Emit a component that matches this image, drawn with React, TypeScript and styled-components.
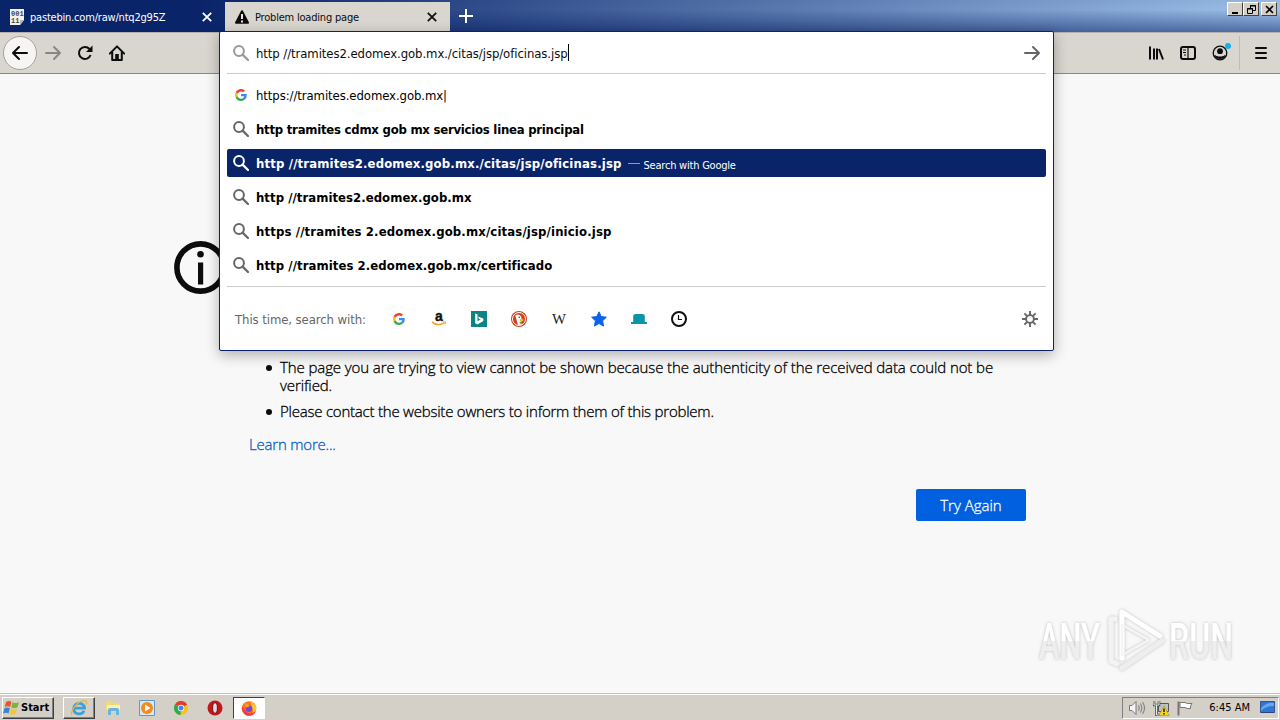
import styled, { createGlobalStyle } from 'styled-components';
import type { ReactNode } from 'react';

const GlobalStyle = createGlobalStyle`
  * {
    box-sizing: border-box;
  }
  body {
    margin: 0;
    overflow: hidden;
    font-family: 'DejaVu Sans Condensed', 'DejaVu Sans', sans-serif;
    font-stretch: condensed;
    color: #0c0c0d;
  }
  svg {
    display: block;
    flex: none;
  }
`;

const results = [
  { text: 'http tramites cdmx gob mx servicios linea principal', spacing: -0.24 },
  {
    text: 'http //tramites2.edomex.gob.mx./citas/jsp/oficinas.jsp',
    spacing: 0.15,
    action: 'Search with Google',
  },
  { text: 'http //tramites2.edomex.gob.mx', spacing: 0.04 },
  { text: 'https //tramites 2.edomex.gob.mx/citas/jsp/inicio.jsp', spacing: 0.14 },
  { text: 'http //tramites 2.edomex.gob.mx/certificado', spacing: 0.07 },
];

const SearchIcon = () => (
  <svg width="16" height="16" viewBox="0 0 16 16" fill="none">
    <circle cx="6" cy="6" r="4.9" stroke="currentColor" strokeWidth="2" />
    <path d="M9.6 9.6 15 15" stroke="currentColor" strokeWidth="2.2" strokeLinecap="round" />
  </svg>
);

const GoogleIcon = () => (
  <svg width="12" height="12" viewBox="0 0 48 48">
    <path fill="#EA4335" d="M24 9.5c3.5 0 6.7 1.2 9.2 3.6l6.9-6.9C35.9 2.4 30.5 0 24 0 14.6 0 6.5 5.4 2.6 13.2l8 6.2C12.4 13.7 17.7 9.5 24 9.5z" />
    <path fill="#4285F4" d="M47 24.5c0-1.6-.2-3.1-.4-4.5H24v9h12.9c-.6 3-2.3 5.5-4.8 7.2l7.7 6C44.4 38 47 31.8 47 24.5z" />
    <path fill="#FBBC05" d="M10.5 28.6c-.5-1.5-.8-3-.8-4.6s.3-3.1.8-4.6l-8-6.2C.9 16.5 0 20.1 0 24s.9 7.5 2.6 10.8l7.9-6.2z" />
    <path fill="#34A853" d="M24 48c6.5 0 11.9-2.1 15.9-5.8l-7.7-6c-2.2 1.4-4.9 2.3-8.2 2.3-6.3 0-11.6-4.2-13.5-9.9l-8 6.2C6.5 42.6 14.6 48 24 48z" />
  </svg>
);

const AmazonIcon = () => (
  <svg width="16" height="16" viewBox="0 0 16 16" overflow="visible">
    <text x="4" y="9.5" fontFamily="Liberation Sans" fontSize="14" fontWeight="700" fill="#111" stroke="#111" strokeWidth=".4">a</text>
    <path d="M1 10.8c3.6 3.4 8.6 3.4 12.3.8" fill="none" stroke="#f5a11c" strokeWidth="1.6" />
    <path d="M12 11.1l2.6-.2-.7 2.6" fill="none" stroke="#f5a11c" />
  </svg>
);

const BingIcon = () => (
  <svg width="16" height="16" viewBox="0 0 16 16">
    <path fill="#0c8484" d="M0 0h16v16H0z" />
    <path fill="#fff" d="M4.2 2.5 6.5 3.3v7l3-1.7-1.5-.7-.9-2.3 5.2 1.8v2.6L6.5 13.5l-2.3-1.3z" />
  </svg>
);

const DuckIcon = () => (
  <svg width="16" height="16" viewBox="0 0 16 16">
    <circle cx="8" cy="8" r="8" fill="#d0401b" />
    <circle cx="8" cy="8" r="6.5" fill="none" stroke="#fff" />
    <path d="M4.3 4.6c2-2 5.5-1 6 1.8l.3 2 2 .8-2.4 1.3.8 3.1-4 .3z" fill="#fff" />
    <path d="M8.5 8.3 12.6 7.8l-.9 2-3 .5z" fill="#f6b421" />
    <path d="M8.5 11l2.5-.5v2l-2.2.2z" fill="#5a9e3a" />
    <circle cx="8.3" cy="6.2" r=".8" fill="#35435c" />
  </svg>
);

const WikipediaIcon = () => (
  <svg width="16" height="16" viewBox="0 0 16 16" overflow="visible">
    <text x="1" y="12.5" fontFamily="Liberation Serif" fontSize="14" textLength="14" lengthAdjust="spacingAndGlyphs" fill="#222">W</text>
  </svg>
);

const StarIcon = () => (
  <svg width="16" height="16" viewBox="0 0 16 16">
    <path fill="#0a62ef" stroke="#0a62ef" strokeLinejoin="round" d="m8 .8 2.2 4.8 5.2.6-3.8 3.6 1 5.3L8 12.5l-4.6 2.6 1-5.3L.6 6.2l5.2-.6z" />
  </svg>
);

const HatIcon = () => (
  <svg width="16" height="16" viewBox="0 0 16 16">
    <path fill="#0c93a8" d="M2.2 11V5.5Q2.2 3 4.7 3h6.6q2.5 0 2.5 2.5V11H16v2H0v-2z" />
  </svg>
);

const ClockIcon = () => (
  <svg width="16" height="16" viewBox="0 0 16 16" fill="none" stroke="#111">
    <circle cx="8" cy="8" r="7" strokeWidth="2" />
    <path d="M7.5 4v4.5H11" strokeWidth="1.2" />
  </svg>
);

const GearIcon = () => (
  <svg width="16" height="16" viewBox="0 0 16 16" fill="none" stroke="#666">
    <circle cx="8" cy="8" r="3.9" strokeWidth="1.9" />
    <path
      d="M8 0v4M8 12v4M0 8h4M12 8h4M2.4 2.4l2.7 2.7M10.9 10.9l2.7 2.7M13.6 2.4l-2.7 2.7M5.1 10.9l-2.7 2.7"
      strokeWidth="1.9"
    />
  </svg>
);

const CloseIcon = ({ color }: { color: string }) => (
  <svg width="10" height="10" viewBox="0 0 10 10" fill="none" stroke={color} strokeWidth="1.8">
    <path d="M.8.8l8.4 8.4M9.2.8.8 9.2" />
  </svg>
);

const ArrowIcon = ({ flip = false }: { flip?: boolean }) => (
  <svg width="18" height="16" viewBox="0 0 18 16" fill="none" stroke="currentColor" strokeWidth="2" strokeLinecap="round" strokeLinejoin="round">
    {flip ? <path d="M16 8H2M8 2 2 8l6 6" /> : <path d="M2 8h14M10 2l6 6-6 6" />}
  </svg>
);

const Watermark = () => (
  <svg width="210" height="70" viewBox="0 0 210 70" overflow="visible">
    <defs>
      <linearGradient id="fade" gradientUnits="userSpaceOnUse" x1="0" y1="15" x2="0" y2="55">
        <stop offset="0.5" stopColor="#fff" />
        <stop offset="0.5" stopColor="#eee" />
      </linearGradient>
      <filter id="soft" x="-10%" y="-10%" width="120%" height="120%">
        <feDropShadow dx="0" dy="0" stdDeviation="1.6" floodColor="#777" floodOpacity="0.5" />
      </filter>
    </defs>
    <g filter="url(#soft)" fontFamily="Roboto" fontSize="50" fontWeight="500">
      <text x="4" y="53" textLength="61" lengthAdjust="spacingAndGlyphs" fill="url(#fade)">ANY</text>
      <text x="134" y="53" textLength="64" lengthAdjust="spacingAndGlyphs" fill="url(#fade)">RUN</text>
      <g fill="none" strokeWidth="5" strokeLinejoin="round" strokeLinecap="round">
        <path d="M80 13h-4v42l6 3" stroke="#f3f3f3" />
        <path d="M87 52V6l38 24" stroke="#fff" />
        <path d="M87 62l40-27" stroke="#eee" />
        <path d="M87 19v30l27-15z" stroke="#f5f5f5" strokeWidth="2.5" />
      </g>
    </g>
  </svg>
);

interface TabProps {
  icon: ReactNode;
  title: string;
  active?: boolean;
}

const Tab = ({ icon, title, active = false }: TabProps) => (
  <TabBox $active={active}>
    {icon}
    <TabTitle>{title}</TabTitle>
    <CloseIcon color={active ? '#111' : '#fff'} />
  </TabBox>
);

const App = () => {
  return (
    <Desktop>
      <GlobalStyle />
      <TitleBar>
        <Tab
          title="pastebin.com/raw/ntq2g95Z"
          icon={
            <svg width="16" height="16" viewBox="0 0 16 16">
              <path d="M1 0h14v11l-4 5H1z" fill="#f4f1ea" />
              <path d="M15 11h-4v5z" fill="#b9b6ae" />
              <g fontFamily="Liberation Mono" fontSize="7" fontWeight="700" fill="#444">
                <text x="2" y="7">001</text>
                <text x="2" y="14">11</text>
              </g>
            </svg>
          }
        />
        <Tab
          active
          title="Problem loading page"
          icon={
            <svg width="16" height="16" viewBox="0 0 16 16">
              <path d="M8 2.2 14 13.8H2z" fill="#0c0c0d" stroke="#0c0c0d" strokeWidth="2" strokeLinejoin="round" />
              <path d="M8 5v5M8 11.5v2" stroke="#fff" strokeWidth="1.8" />
            </svg>
          }
        />
        <NewTab>
          <svg width="14" height="14" viewBox="0 0 14 14" stroke="#fff" strokeWidth="2">
            <path d="M7 0v14M0 7h14" />
          </svg>
        </NewTab>
        <WindowControls>
          <WindowButton>
            <svg width="11" height="9" viewBox="0 0 11 9"><path d="M2 7h6v2H2z" /></svg>
          </WindowButton>
          <WindowButton>
            <svg width="11" height="9" viewBox="0 0 11 9" fill="none" stroke="#000">
              <path d="M4.5 3V.5h5v5H7M4 1h6M1.5 3.5h5v5h-5zM1 4h6" />
            </svg>
          </WindowButton>
          <WindowButton $gap>
            <svg width="11" height="9" viewBox="0 0 11 9" stroke="#000" strokeWidth="1.6">
              <path d="M2 1l7 7M9 1 2 8" />
            </svg>
          </WindowButton>
        </WindowControls>
      </TitleBar>

      <Toolbar>
        <ToolGroup>
          <BackButton>
            <ArrowIcon flip />
          </BackButton>
          <Forward>
            <ArrowIcon />
          </Forward>
          <svg width="16" height="16" viewBox="0 0 16 16" fill="none" stroke="#0c0c0d" strokeWidth="2">
            <path d="M13.6 10A6 6 0 1 1 12.5 4" />
            <path d="M15.5.5v6.5H9z" fill="#0c0c0d" stroke="none" />
          </svg>
          <svg width="16" height="16" viewBox="0 0 16 16" fill="none" stroke="#0c0c0d" strokeWidth="2">
            <path d="M.8 8.6 8 1.4l7.2 7.2" strokeLinecap="round" strokeLinejoin="round" />
            <path d="M3.2 7v8h9.6V7" strokeLinejoin="round" />
            <path d="M6.2 9h3.6v6H6.2z" fill="#0c0c0d" stroke="none" />
          </svg>
        </ToolGroup>
        <ToolGroup $right>
          <svg width="16" height="16" viewBox="0 0 16 16" stroke="#0c0c0d" strokeWidth="2">
            <path d="M2 1.5v13M6 3.5v11M9 3.5v11M11 4l4 10.5" />
          </svg>
          <svg width="16" height="16" viewBox="0 0 16 16" fill="none" stroke="#0c0c0d" strokeWidth="2">
            <rect x="1" y="2" width="14" height="12" rx="2" />
            <path d="M8 2v12" strokeWidth="1.2" />
            <path d="M3 5h3M3 7.5h3M4 10h2" strokeWidth="1" />
          </svg>
          <Account>
            <svg width="16" height="16" viewBox="0 0 16 16">
              <circle cx="8" cy="8" r="6.8" fill="none" stroke="#0c0c0d" strokeWidth="1.3" />
              <circle cx="8" cy="6.2" r="2.9" fill="#0c0c0d" />
              <path d="M3 10.5c1.5 2 8.5 2 10 0-1 4-9 4-10 0z" fill="#0c0c0d" stroke="#0c0c0d" />
            </svg>
            <Badge />
          </Account>
          <Divider />
          <svg width="12" height="14" viewBox="0 0 12 14" stroke="#0c0c0d" strokeWidth="2" strokeLinecap="round">
            <path d="M1 2h10M1 7h10M1 12h10" />
          </svg>
        </ToolGroup>
      </Toolbar>

      <Page>
        <ErrorIcon>
          <svg width="53" height="53" viewBox="0 0 53 53">
            <circle cx="26.5" cy="26.5" r="23.6" fill="none" stroke="#0c0c0d" strokeWidth="5.6" />
            <circle cx="26.5" cy="13.3" r="3.3" fill="#0c0c0d" />
            <path d="M24 21.5h5.2v22H24z" fill="#0c0c0d" />
          </svg>
        </ErrorIcon>
        <ErrorBody>
          <Reasons>
            <Reason $spacing={-0.1}>
              The page you are trying to view cannot be shown because the authenticity of the received data could not be verified.
            </Reason>
            <Reason $spacing={-0.22}>Please contact the website owners to inform them of this problem.</Reason>
          </Reasons>
          <LearnMore>Learn more...</LearnMore>
          <TryAgain>Try Again</TryAgain>
        </ErrorBody>
        <WatermarkBox>
          <Watermark />
        </WatermarkBox>
      </Page>

      <Taskbar>
        <StartButton>
          <svg width="18" height="16" viewBox="0 0 18 16">
            <path d="M3 2q3-2 5.5-.2L7.2 7Q4.5 5.5 1.7 7z" fill="#e8582a" />
            <path d="M9.5 2.3q3 1.6 6.5 0L14.5 7.5q-3 1.5-6.3 0z" fill="#7db63c" />
            <path d="M1.4 8.2q3-1.5 5.5 0L5.5 13.5Q3 12 0 13.5z" fill="#3d83d0" />
            <path d="M8 8.8q3 1.5 6.2 0l-1.4 5q-3 1.7-6.2.2z" fill="#f8c530" />
          </svg>
          Start
        </StartButton>
        <TaskButton $state="raised">
          <svg width="18" height="18" viewBox="0 0 18 18" fill="none">
            <path d="M3.5 9.2h11c0-6.5-10.8-6.5-10.8.6 0 6.2 8.5 6.5 10.3 1.9" stroke="#3aa0e0" strokeWidth="2.8" />
            <path d="M2 16C-1 13 9-.5 16 2c1.5.8.5 2.5 0 3.5" stroke="#edb52f" strokeWidth="1.3" />
          </svg>
        </TaskButton>
        <TaskButton>
          <svg width="17" height="16" viewBox="0 0 17 16">
            <path d="M1 1h6l1 2h7v9H1z" fill="#f1d77c" />
            <path d="M2 5h13v5H2z" fill="#fbefb8" />
            <path d="M3 15V9.5q0-1.5 2-1.5h7q2 0 2 1.5V15h-3v-4H6v4z" fill="#67b7dd" />
          </svg>
        </TaskButton>
        <TaskButton>
          <svg width="16" height="16" viewBox="0 0 16 16">
            <path d="M.5.5h15v15H.5z" fill="#d4e8f6" stroke="#6199c6" />
            <circle cx="8" cy="8" r="6" fill="#f28a1c" />
            <path d="M6 4.5 11.5 8 6 11.5z" fill="#fff" />
          </svg>
        </TaskButton>
        <TaskButton>
          <svg width="14" height="14" viewBox="0 0 14 14">
            <circle cx="7" cy="7" r="7" fill="#fbc116" />
            <path d="M7 7 .9 3.5A7 7 0 0 1 13.1 3.5z" fill="#e33b2e" />
            <path d="M7 7 .9 3.5A7 7 0 0 0 6.5 14z" fill="#2da94f" />
            <circle cx="7" cy="7" r="3.2" fill="#fff" />
            <circle cx="7" cy="7" r="2.5" fill="#4285f4" />
          </svg>
        </TaskButton>
        <TaskButton>
          <svg width="16" height="16" viewBox="0 0 16 16">
            <circle cx="8" cy="8" r="7.5" fill="#c31720" />
            <ellipse cx="8" cy="8" rx="2.4" ry="5.3" fill="#ddd" stroke="#7d0b12" />
          </svg>
        </TaskButton>
        <TaskButton $state="pressed">
          <svg width="16" height="16" viewBox="0 0 16 16">
            <circle cx="8" cy="8.5" r="7.3" fill="#fb7a1e" />
            <path d="M10 1c1 2 5.8 3.2 5.3 8-1 3-2 4-3.3 4.5C13 8 9 6 10 1z" fill="#ffc52b" />
            <path d="M1 6.5C.5 13 5 16 8 15.8c4 0 6-2.3 7-5-2 3-9 4-11-1z" fill="#f4394c" />
            <circle cx="8" cy="8.7" r="3.2" fill="#7a45d5" />
            <path d="M3 3.5c2-.5 3.5 0 4.5 1.5l1 1.5-3 1z" fill="#ff9b20" />
          </svg>
        </TaskButton>
        <Tray>
          <svg width="18" height="16" viewBox="0 0 18 16" fill="#f4f4f4" stroke="#777">
            <path d="M1.5 5.5H4l4-4v13l-4-4H1.5z" />
            <path d="M10.5 5.5q1.5 2.5 0 5M12.5 3.5q3 4.5 0 9M14.5 2q4 6 0 12" fill="none" />
          </svg>
          <svg width="17" height="16" viewBox="0 0 17 16">
            <path d="M5.5 3.5h10v8h-10z" fill="#b9c3c9" stroke="#555" />
            <path d="M1 1v4h5V1M3.5 5v10H8" fill="none" stroke="#444" strokeWidth="2.5" />
            <path d="M1 1v4h5V1M3.5 5v10H8" fill="none" stroke="#eee" />
            <path d="m11 5.8 5.2 9.7H5.8z" fill="#f7d718" stroke="#a58d10" strokeWidth=".6" />
            <path d="M11 8.5v3.5M11 13v1.5" stroke="#111" strokeWidth="1.4" />
          </svg>
          <svg width="16" height="16" viewBox="0 0 16 16">
            <path d="M1.5 1.5v14" stroke="#777" strokeWidth="2" />
            <path d="M3 2.5h5q1 1.5 7 1-2 2-1.5 5-4 .5-5.5-1H3z" fill="#fff" stroke="#777" />
          </svg>
          <Clock>6:45 AM</Clock>
          <svg width="15" height="13" viewBox="0 0 15 13">
            <path d="M.5.5h14v11H.5z" fill="#2f75d2" stroke="#31558c" />
            <path d="M1 7Q7 1 14 2v3Q6 5 1 10z" fill="#68a5ed" />
            <path d="M1 11.5h13" stroke="#234778" />
          </svg>
        </Tray>
      </Taskbar>

      <UrlPopup>
        <InputRow>
          <Muted $color="#999"><SearchIcon /></Muted>
          <UrlText>http //tramites2.edomex.gob.mx./citas/jsp/oficinas.jsp</UrlText>
          <Caret />
          <Go><ArrowIcon /></Go>
        </InputRow>
        <Results>
          <ResultRow>
            <GoogleSlot><GoogleIcon /></GoogleSlot>
            <UrlText>https://tramites.edomex.gob.mx|</UrlText>
          </ResultRow>
          {results.map(({ text, spacing, action }) => (
            <ResultRow key={text} $selected={!!action}>
              <Muted $color={action ? '#fff' : '#666'}><SearchIcon /></Muted>
              <ResultText $spacing={spacing}>{text}</ResultText>
              {action && (
                <>
                  <Dash />
                  <ActionText>{action}</ActionText>
                </>
              )}
            </ResultRow>
          ))}
        </Results>
        <OneOffs>
          <OneOffLabel>This time, search with:</OneOffLabel>
          <Engine><GoogleIcon /></Engine>
          <Engine><AmazonIcon /></Engine>
          <Engine><BingIcon /></Engine>
          <Engine><DuckIcon /></Engine>
          <Engine><WikipediaIcon /></Engine>
          <Engine><StarIcon /></Engine>
          <Engine><HatIcon /></Engine>
          <Engine><ClockIcon /></Engine>
          <Settings><GearIcon /></Settings>
        </OneOffs>
      </UrlPopup>
    </Desktop>
  );
};

export default App;

const Desktop = styled.div`
  position: relative;
  display: flex;
  flex-direction: column;
  width: 1280px;
  height: 720px;
  overflow: hidden;
  background: #f8f8f8;
  white-space: nowrap;
`;
const TitleBar = styled.header`
  display: flex;
  height: 32px;
  flex: none;
  background:
    linear-gradient(to bottom, rgba(10, 36, 106, 0.1), rgba(10, 36, 106, 0.05) 30%, rgba(10, 36, 106, 0.55)),
    linear-gradient(to right, #0a246a 200px, #a6caf0);
`;
const TabBox = styled.div<{ $active: boolean }>`
  display: flex;
  align-items: center;
  width: 225px;
  height: ${props => (props.$active ? 29 : 32)}px;
  margin-top: ${props => (props.$active ? 2 : 0)}px;
  padding: 1px 13px 0 9px;
  gap: 5px;
  background: ${props => (props.$active ? '#d9d5cf' : 'transparent')};
  color: ${props => (props.$active ? '#0c0c0d' : '#fff')};
`;
const TabTitle = styled.span`
  flex: 1;
  padding-top: 1px;
  font-size: 11px;
  letter-spacing: -0.2px;
`;
const NewTab = styled.div`
  padding: 9px;
`;
const WindowControls = styled.div`
  display: flex;
  margin-left: auto;
  padding: 2px 3px 0 0;
`;
const WindowButton = styled.div<{ $gap?: boolean }>`
  display: flex;
  justify-content: center;
  align-items: center;
  width: 16px;
  height: 14px;
  margin-left: ${props => (props.$gap ? 2 : 0)}px;
  background: #d4d0c8;
  border: 1px solid;
  border-color: #fff #404040 #404040 #fff;
`;
const Toolbar = styled.div`
  display: flex;
  justify-content: space-between;
  height: 42px;
  flex: none;
  background: #d9d5cf;
  border-top: 1px solid #b5b2ad;
  border-bottom: 1px solid #8c8984;
`;
const ToolGroup = styled.div<{ $right?: boolean }>`
  display: flex;
  align-items: center;
  gap: 16px;
  padding: ${props => (props.$right ? '0 13px 0 0' : '0 0 0 3px')};
`;
const BackButton = styled.div`
  display: flex;
  align-items: center;
  justify-content: center;
  width: 34px;
  height: 34px;
  margin-right: -9px;
  border: 1px solid #a5a29d;
  border-radius: 50%;
  background: #f6f5f3;
`;
const Forward = styled.div`
  color: #8a8783;
  margin-right: -1px;
`;
const Account = styled.div`
  position: relative;
`;
const Badge = styled.div`
  position: absolute;
  top: -2px;
  right: -3px;
  width: 6px;
  height: 6px;
  border-radius: 50%;
  background: #14aef0;
`;
const Divider = styled.div`
  width: 1px;
  height: 34px;
  margin: 0 -1px 0 -5px;
  background: #bfbbb5;
`;
const Page = styled.main`
  display: flex;
  align-items: flex-start;
  flex: 1;
  padding: 0 0 0 174px;
  font-family: 'Open Sans', sans-serif;
  font-size: 15px;
  font-weight: 300;
  font-stretch: normal;
`;
const ErrorIcon = styled.div`
  padding-top: 167px;
`;
const ErrorBody = styled.div`
  display: flex;
  flex-direction: column;
  align-items: flex-start;
  width: 777px;
  margin-left: 22px;
  padding-top: 284px;
  -webkit-text-stroke-width: 0.3px;
`;
const Reasons = styled.ul`
  margin: 0;
  padding: 0 20px 0 17px;
  list-style: none;
  white-space: normal;
`;
const Reason = styled.li<{ $spacing: number }>`
  display: flex;
  gap: 8px;
  margin-bottom: 8px;
  line-height: 18px;
  letter-spacing: ${props => props.$spacing}px;
  color: #000;
  &::before {
    content: '';
    flex: none;
    width: 6px;
    height: 6px;
    margin-top: 7px;
    border-radius: 50%;
    background: #0c0c0d;
  }
`;
const LearnMore = styled.a`
  margin-top: 7px;
  line-height: 18px;
  letter-spacing: -0.2px;
  color: #0a5cc4;
`;
const TryAgain = styled.button`
  align-self: flex-end;
  width: 110px;
  height: 32px;
  margin-top: 36px;
  padding: 0;
  border: 0;
  border-radius: 2px;
  background: #0060df;
  color: #fff;
  font: inherit;
  -webkit-text-stroke-width: inherit;
`;
const WatermarkBox = styled.div`
  align-self: flex-end;
  margin: 0 0 17px 9px;
`;
const Taskbar = styled.footer`
  display: flex;
  align-items: center;
  height: 27px;
  flex: none;
  padding: 1px 1px 0 2px;
  background: #d4d0c8;
  border-top: 1px solid #c6c2ba;
  box-shadow: inset 0 1px #fff;
`;
const StartButton = styled.div`
  display: flex;
  align-items: center;
  width: 52px;
  height: 22px;
  margin-right: 9px;
  border: 1px solid;
  border-color: #fff #404040 #404040 #fff;
  box-shadow: inset -1px -1px #808080;
  font-size: 11px;
  font-weight: bold;
  color: #000;
`;
const TaskButton = styled.div<{ $state?: 'raised' | 'pressed' }>`
  display: flex;
  align-items: center;
  justify-content: center;
  width: 32px;
  height: 22px;
  margin-right: 2px;
  border: 1px solid transparent;
  ${props => props.$state === 'raised' && 'border-color: #fff #404040 #404040 #fff; box-shadow: inset -1px -1px #808080;'}
  ${props => props.$state === 'pressed' && 'border-color: #404040 #fff #fff #404040; background: #fff;'}
`;
const Tray = styled.div`
  display: flex;
  align-items: center;
  gap: 7px;
  width: 157px;
  height: 22px;
  margin-left: auto;
  padding: 0 3px 0 5px;
  border: 1px solid;
  border-color: #808080 #fff #fff #808080;
`;
const Clock = styled.span`
  margin-left: auto;
  margin-right: 3px;
  font-size: 11px;
  color: #000;
`;
const UrlPopup = styled.section`
  position: absolute;
  top: 31px;
  left: 219px;
  width: 835px;
  height: 320px;
  padding: 0 7px;
  display: flex;
  flex-direction: column;
  border: 1px solid #0a246a;
  border-radius: 2px;
  background: #fff;
  box-shadow: 0 4px 14px rgba(0, 0, 0, 0.3);
`;
const InputRow = styled.div`
  display: flex;
  align-items: center;
  height: 42px;
  padding: 0 5px 0 6px;
  border-bottom: 1px solid #ccc;
`;
const Muted = styled.span<{ $color: string }>`
  margin-right: 7px;
  color: ${props => props.$color};
`;
const UrlText = styled.span`
  padding-top: 1px;
  font-size: 13px;
  letter-spacing: -0.08px;
`;
const Caret = styled.span`
  width: 1px;
  height: 17px;
  background: #000;
`;
const Go = styled.span`
  margin-left: auto;
  color: #666;
`;
const Results = styled.div`
  padding: 7px 0;
  border-bottom: 1px solid #ccc;
`;
const ResultRow = styled.div<{ $selected?: boolean }>`
  display: flex;
  align-items: center;
  height: 28px;
  margin-bottom: 6px;
  padding-left: 6px;
  border-radius: 2px;
  background: ${props => (props.$selected ? '#0a246a' : 'transparent')};
  color: ${props => (props.$selected ? '#fff' : '#000')};
  &:last-child {
    margin-bottom: 0;
  }
`;
const GoogleSlot = styled.span`
  width: 23px;
  padding-left: 2px;
`;
const ResultText = styled.span<{ $spacing: number }>`
  font-size: 13px;
  font-weight: bold;
  letter-spacing: ${props => props.$spacing}px;
`;
const Dash = styled.span`
  width: 12px;
  height: 1px;
  margin: 0 4px 0 6px;
  background: #7c9bd8;
`;
const ActionText = styled.span`
  padding-top: 4px;
  font-size: 11px;
  letter-spacing: -0.22px;
`;
const OneOffs = styled.div`
  display: flex;
  align-items: center;
  flex: 1;
  padding: 0 8px;
`;
const OneOffLabel = styled.span`
  width: 144px;
  padding-top: 1px;
  font-size: 13px;
  letter-spacing: -0.08px;
  color: #666;
`;
const Engine = styled.span`
  display: flex;
  justify-content: center;
  width: 40px;
`;
const Settings = styled.span`
  margin-left: auto;
`;
